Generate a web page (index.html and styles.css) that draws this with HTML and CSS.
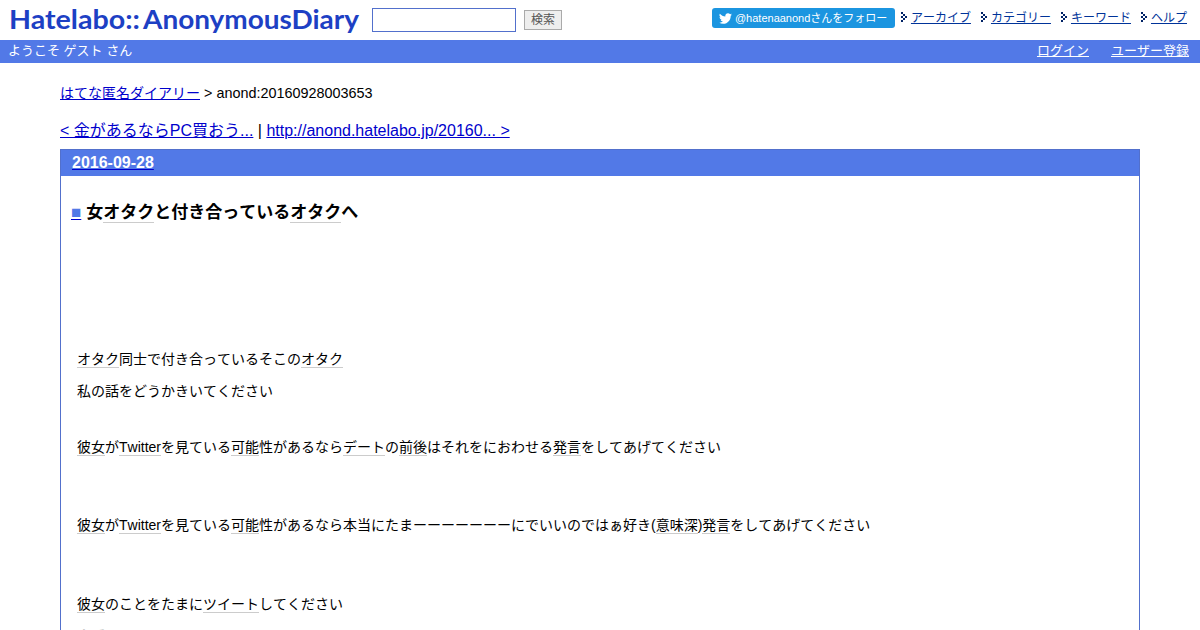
FILE: index.html
```html
<!DOCTYPE html>
<html lang="ja">
<head>
    <meta charset="UTF-8">
    <title>女オタクと付き合っているオタクへ</title>
    <link rel="stylesheet" href="styles.css">
</head>
<body>
    <div id="header" class="header">
        <h1 class="logo">
            <svg width="352" height="34" viewBox="0 0 352 34">
                <text class="logo-text" x="0" y="25" textLength="131" lengthAdjust="spacingAndGlyphs">Hatelabo::</text>
                <text class="logo-text" x="134" y="25" textLength="216" lengthAdjust="spacingAndGlyphs">AnonymousDiary</text>
            </svg>
        </h1>
        <form class="search">
            <input type="text" class="search-word">
            <input type="submit" class="search-button" value="検索">
        </form>
        <ul class="global-menu">
            <li class="follow">
                <a href="#">
                    <svg class="bird" width="13" height="13" viewBox="0 0 24 24"><path fill="#fff" d="M23.95 4.57a10 10 0 0 1-2.82.77 4.96 4.96 0 0 0 2.16-2.72c-.95.55-2 .95-3.13 1.18a4.92 4.92 0 0 0-8.38 4.48C7.69 8.09 4.07 6.13 1.64 3.16a4.93 4.93 0 0 0 1.52 6.57 4.9 4.9 0 0 1-2.23-.61v.06a4.92 4.92 0 0 0 3.95 4.83 5 5 0 0 1-2.21.08 4.94 4.94 0 0 0 4.6 3.42A9.87 9.87 0 0 1 0 19.54a14 14 0 0 0 7.55 2.21c9.05 0 14-7.5 14-13.98 0-.21 0-.42-.02-.63a9.94 9.94 0 0 0 2.42-2.57z"/></svg>
                    <span>@hatenaanondさんをフォロー</span>
                </a>
            </li>
            <li><svg class="arrow" width="6" height="10" viewBox="0 0 6 10"><path d="M0 0h2v2H0zM2 2h2v2H2zM4 4h2v2H4zM2 6h2v2H2zM0 8h2v2H0zM0 4h2v2H0z"/></svg><a href="#">アーカイブ</a></li>
            <li><svg class="arrow" width="6" height="10" viewBox="0 0 6 10"><path d="M0 0h2v2H0zM2 2h2v2H2zM4 4h2v2H4zM2 6h2v2H2zM0 8h2v2H0zM0 4h2v2H0z"/></svg><a href="#">カテゴリー</a></li>
            <li><svg class="arrow" width="6" height="10" viewBox="0 0 6 10"><path d="M0 0h2v2H0zM2 2h2v2H2zM4 4h2v2H4zM2 6h2v2H2zM0 8h2v2H0zM0 4h2v2H0z"/></svg><a href="#">キーワード</a></li>
            <li><svg class="arrow" width="6" height="10" viewBox="0 0 6 10"><path d="M0 0h2v2H0zM2 2h2v2H2zM4 4h2v2H4zM2 6h2v2H2zM0 8h2v2H0zM0 4h2v2H0z"/></svg><a href="#">ヘルプ</a></li>
        </ul>
    </div>
    <div class="banner">
        <span class="welcome">ようこそ ゲスト さん</span>
        <a href="#">ログイン</a>
        <a href="#">ユーザー登録</a>
    </div>

    <div id="body" class="main">
        <p class="crumbs"><a href="#">はてな匿名ダイアリー</a> &gt; anond:20160928003653</p>
        <p class="pager"><a href="#">&lt; 金があるならPC買おう...</a> | <a href="#">http://anond.hatelabo.jp/20160... &gt;</a></p>
        <div class="day">
            <h2><a href="#"><span class="date">2016-09-28</span></a></h2>
            <div class="section">
                <h3><a href="#"><span class="sanchor">■</span></a>女<a class="keyword">オタク</a>と付き合っている<a class="keyword">オタク</a>へ</h3>
                <p><a class="keyword">オタク</a>同士で付き合っているそこの<a class="keyword">オタク</a></p>
                <p>私の話をどうかきいてください</p>
                <p class="gap"><a class="keyword">彼女</a>が<a class="keyword">Twitter</a>を見ている<a class="keyword">可能</a>性があるなら<a class="keyword">デート</a>の<a class="keyword">前後</a>はそれをにおわせる<a class="keyword">発言</a>をしてあげてください</p>
                <p class="gap-wide"><a class="keyword">彼女</a>が<a class="keyword">Twitter</a>を見ている<a class="keyword">可能</a>性があるなら本当にたまーーーーーーーにでいいのではぁ好き(<a class="keyword">意味深</a>)<a class="keyword">発言</a>をしてあげてください</p>
                <p class="gap-last"><a class="keyword">彼女</a>のことをたまに<a class="keyword">ツイート</a>してください</p>
                <p class="small"><a class="keyword">会話</a></p>
            </div>
        </div>
    </div>
</body>
</html>
```
FILE: styles.css
```css
html {
    overflow: hidden;
}

body {
    margin: 0;
    background: #fff;
    color: #000;
    font-family: "Liberation Sans", "Noto Sans CJK JP", sans-serif;
    font-size: 14px;
    font-kerning: none;
}

h1, h2, h3, p, ul {
    margin: 0;
    padding: 0;
}

a {
    color: #0000cc;
}

/* header */
.header {
    display: flex;
    height: 40px;
}

.logo {
    padding: 4px 0 0 9px;
    line-height: 0;
}

.logo-text {
    fill: #1d40c4;
    font: 700 26px Lato, sans-serif;
}

.search {
    display: flex;
    align-items: flex-start;
    padding: 8px 0 0 11px;
}

.search-word {
    box-sizing: border-box;
    width: 144px;
    height: 24px;
    border: 1px solid #5270cc;
    background: #fff;
}

.search-button {
    box-sizing: border-box;
    width: 38px;
    height: 20px;
    margin: 2px 0 0 8px;
    padding: 0;
    border: 1px solid #aaa;
    background: #eee;
    color: #555;
    font: 12px/16px "Liberation Sans", "Noto Sans CJK JP", sans-serif;
}

.global-menu {
    display: flex;
    gap: 10px;
    margin-left: auto;
    padding: 8px 13px 0 0;
    list-style: none;
    font-size: 12px;
    line-height: 21px;
}

.global-menu a {
    color: #003399;
}

.global-menu .arrow {
    margin-right: 4px;
    fill: #002266;
}

.follow {
    margin-right: -4px;
}

.global-menu .follow a {
    box-sizing: border-box;
    display: flex;
    align-items: center;
    gap: 3px;
    width: 183px;
    height: 20px;
    padding-left: 7px;
    border-radius: 3px;
    background: #1b95e0;
    color: #fff;
    font-size: 11px;
    text-decoration: none;
    white-space: nowrap;
}

.banner {
    display: flex;
    gap: 22px;
    height: 23px;
    padding: 0 11px 0 8px;
    background: #5279e7;
    color: #fff;
    font-size: 13px;
    line-height: 22px;
}

.banner .welcome {
    margin-right: auto;
}

.banner a {
    color: #fff;
}

/* diary */
.main {
    padding: 19px 60px 0;
}

.crumbs {
    font-size: 14.4px;
    line-height: 22px;
}

.crumbs a {
    font-size: 14px;
}

.pager {
    padding-top: 15px;
    font-size: 16px;
    line-height: 24px;
}

.day {
    margin-top: 6px;
    border: 1px solid #5270cc;
}

.day h2 {
    height: 26px;
    padding-left: 11px;
    background: #5279e7;
    font-size: 16px;
    line-height: 25px;
}

.day .date {
    color: #fff;
}

.section {
    padding: 25px 16px 0;
}

.section h3 {
    margin: 0 0 123px -6px;
    font-size: 17px;
    line-height: 24px;
}

.section .sanchor {
    margin-right: 5px;
    color: #5279e7;
}

.section p {
    margin-bottom: 10px;
    line-height: 22px;
}

.section .gap {
    margin-top: 34px;
}

.section .gap-wide {
    margin-top: 56px;
}

.section .gap-last {
    margin-top: 57px;
}

.section .small {
    line-height: 23px;
}

.section .small .keyword {
    color: #bbb;
}

.keyword {
    border-bottom: 1px solid #ccc;
    color: #000;
    text-decoration: none;
}
```
